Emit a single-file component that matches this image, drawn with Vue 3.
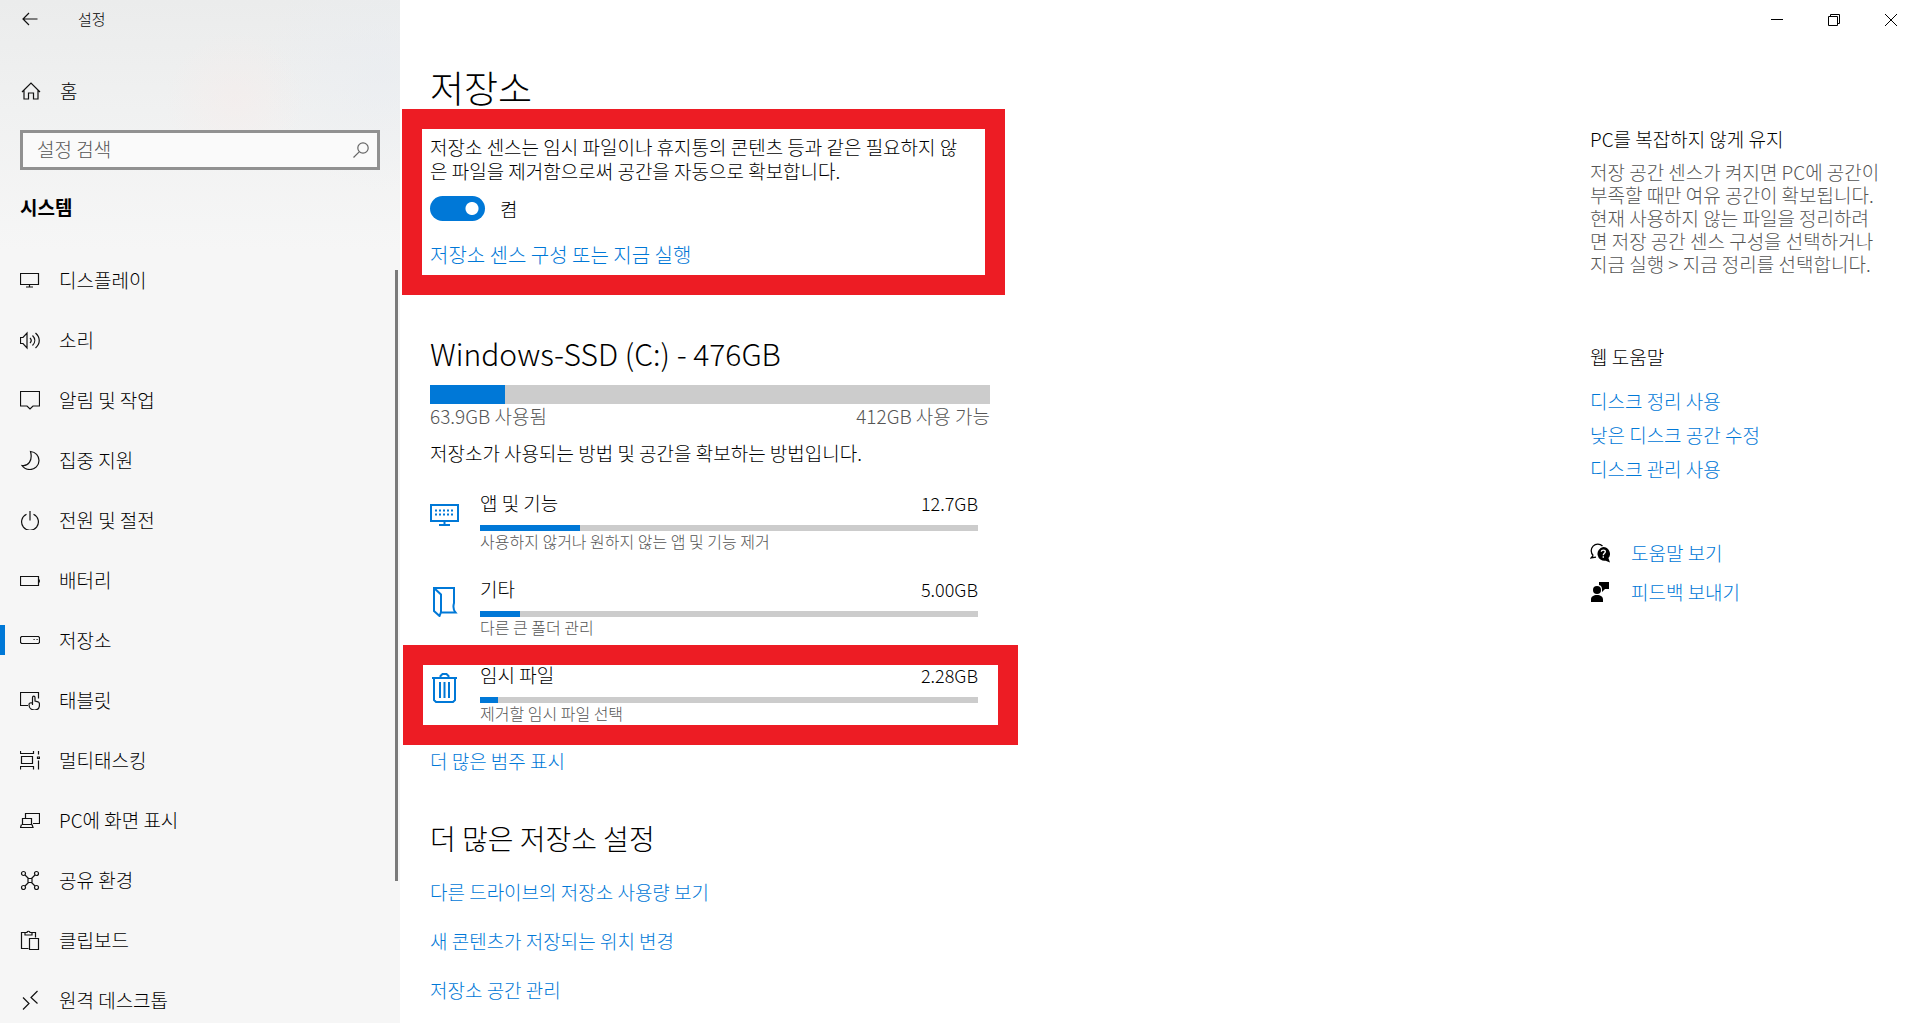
<template>
  <div class="settings">
    <aside class="sidebar">
      <div class="titlebar">
        <button class="back-btn" aria-label="뒤로">
          <svg width="16" height="14" viewBox="0 0 16 14" class="line"><path d="M15.500 7H1M7 1L1 7l6 6" /></svg>
        </button>
        <span class="app-name">설정</span>
      </div>

      <a href="#" class="home-link">
        <svg width="20" height="20" viewBox="0 0 20 20" class="line"><path d="M1 11L10 2l9 9M3 9.500V18h4.500v-6h5v6H17V9.500" /></svg>
        <span>홈</span>
      </a>

      <div class="search">
        <input v-model="query" type="text" placeholder="설정 검색" aria-label="설정 검색">
        <svg width="16" height="16" viewBox="0 0 16 16" class="line"><circle cx="10" cy="6" r="5.200" /><path d="M6.200 9.800L.5 15.500" /></svg>
      </div>

      <h2 class="group-title">시스템</h2>

      <nav class="nav">
        <a v-for="item in navItems" :key="item.label" href="#" class="nav-item" :class="{ active: item.label === current }" @click.prevent="current = item.label">
          <svg width="20" height="20" viewBox="0 0 20 20" class="line"><path :d="item.icon" /></svg>
          <span>{{ item.label }}</span>
        </a>
        <div class="scroll-thumb"></div>
      </nav>
    </aside>

    <div class="page">
      <div class="window-controls">
        <button aria-label="최소화"><svg width="12" height="12" viewBox="0 0 12 12"><path d="M0 5.500h12" /></svg></button>
        <button aria-label="이전 크기로"><svg width="12" height="12" viewBox="0 0 12 12"><path d="M.5 2.500h9v9h-9zM2.500 2.500v-2h9v9h-2" /></svg></button>
        <button aria-label="닫기"><svg width="12" height="12" viewBox="0 0 12 12"><path d="M0 0l12 12M12 0L0 12" /></svg></button>
      </div>

      <div class="content">
        <main class="main">
          <h1>저장소</h1>

          <section class="sense">
            <p>저장소 센스는 임시 파일이나 휴지통의 콘텐츠 등과 같은 필요하지 않<br>은 파일을 제거함으로써 공간을 자동으로 확보합니다.</p>
            <div class="toggle-row">
              <input id="sense" v-model="senseOn" type="checkbox" class="toggle">
              <label for="sense">{{ senseOn ? '켬' : '끔' }}</label>
            </div>
            <a href="#">저장소 센스 구성 또는 지금 실행</a>
            <div class="frame frame-sense"></div>
          </section>

          <section class="drive">
            <h2 class="drive-title">Windows-SSD (C:) - 476GB</h2>
            <div class="drive-bar"><div class="fill" :style="{ width: '13.4%' }"></div></div>
            <div class="drive-labels">
              <span>63.9GB 사용됨</span>
              <span>412GB 사용 가능</span>
            </div>
            <p class="drive-desc">저장소가 사용되는 방법 및 공간을 확보하는 방법입니다.</p>

            <ul class="usage">
              <li v-for="u in usage" :key="u.name" class="usage-item">
                <svg width="30" height="30" viewBox="0 0 30 30" class="usage-icon"><path :d="u.icon" /></svg>
                <div class="usage-body">
                  <div class="usage-head">
                    <span>{{ u.name }}</span>
                    <span class="usage-size">{{ u.size }}</span>
                  </div>
                  <div class="usage-bar"><div class="fill" :style="{ width: u.percent + '%' }"></div></div>
                  <p class="usage-desc">{{ u.desc }}</p>
                </div>
                <div v-if="u.marked" class="frame frame-item"></div>
              </li>
            </ul>
            <a href="#">더 많은 범주 표시</a>
          </section>

          <section class="more">
            <h2>더 많은 저장소 설정</h2>
            <a v-for="link in moreLinks" :key="link" href="#">{{ link }}</a>
          </section>
        </main>

        <aside class="help">
          <h3>PC를 복잡하지 않게 유지</h3>
          <p>저장 공간 센스가 켜지면 PC에 공간이<br>부족할 때만 여유 공간이 확보됩니다.<br>현재 사용하지 않는 파일을 정리하려<br>면 저장 공간 센스 구성을 선택하거나<br>지금 실행 &gt; 지금 정리를 선택합니다.</p>

          <h3 class="web-title">웹 도움말</h3>
          <div class="web-links">
            <a v-for="link in webLinks" :key="link" href="#">{{ link }}</a>
          </div>

          <div class="support">
            <a href="#">
              <svg width="20" height="20" viewBox="0 0 20 20">
                <path d="M3.200 12.500A6.300 6.300 0 1 1 12.500 3M3.200 12.500L1 15l5-.8" fill="none" stroke="#000" stroke-width="1.300" />
                <path d="M13.200 4a6.800 6.800 0 0 1 5.200 11.100L20 19.500l-4.300-1.800A6.800 6.800 0 1 1 13.200 4z" />
                <path d="M11.300 8.800c.2-2.200 4-2.200 4 0 0 1.500-2 1.600-2 3.400M13.300 13.300v1.500" fill="none" stroke="#fff" stroke-width="1.400" />
              </svg>
              <span>도움말 보기</span>
            </a>
            <a href="#">
              <svg width="20" height="20" viewBox="0 0 20 20">
                <circle cx="7" cy="8" r="4" />
                <path d="M1 20v-2.500C1 14.500 3.500 13 7 13s6 1.500 6 4.500V20zM9 0h10v7h-4l-3 3V7.500C12 5 11 3.500 9 3z" />
              </svg>
              <span>피드백 보내기</span>
            </a>
          </div>
        </aside>
      </div>
    </div>
  </div>
</template>

<script setup>
import { ref } from 'vue';

const query = ref('');
const current = ref('저장소');
const senseOn = ref(true);

const navItems = [
  { label: '디스플레이', icon: 'M.5 3.500h18v11H.5zM9.500 14.500v2.500M6 17h7' },
  { label: '소리', icon: 'M.5 7.500h2.500L7 3v15l-4-4.500H.5zM10 8c1.500 1.500 1.500 3.500 0 5M12.500 5.500c3 3 3 7 0 10M15.500 3c5 4.500 5 10.500 0 15' },
  { label: '알림 및 작업', icon: 'M.5 1.500h19v14.500H13l-3 3-3-3H.5z' },
  { label: '집중 지원', icon: 'M10.500 1.500C15.500 2 19 5.500 19 10.500c0 5-4 9-9 9-3.500 0-6.500-1.500-8-4 6 1 11-4.500 8.500-14z' },
  { label: '전원 및 절전', icon: 'M10 1v9.500M6.500 4.200a8.400 8.400 0 1 0 7 0' },
  { label: '배터리', icon: 'M.5 6.500h18v9H.5zM19.300 9.500v3' },
  { label: '저장소', icon: 'M1.500 6.500h17l1 1v5l-1 1h-17l-1-1v-5zM13.500 9.500h1.200M16.500 9.500h1.200' },
  { label: '태블릿', icon: 'M8 15.500H.5v-13h18v6M12.500 15V7.500c0-1.800 2.500-1.800 2.500 0V11l3 .8c1.500.5 1.500 1.500 1.500 3 0 3-1.500 5.200-5 5.200-3.500 0-5.500-2.500-5.500-5.500 0-1.500 1.500-2 3.500-1.500' },
  { label: '멀티태스킹', icon: 'M.5 1v2.500h13V1M.5 19.500v-3h13v3M1.500 6.500h11v7h-11zM18.500 1v3.500M18.500 10.500v9M17.500 7h2v1.500h-2z' },
  { label: 'PC에 화면 표시', icon: 'M5.500 8V3.500h14v10H13M2.500 8.500h9v6h-9zM1.500 14.500L.5 17.500h12.500l-1-3' },
  { label: '공유 환경', icon: 'M5 5l3.500 3.500M15 5l-3.500 3.500M5 16l3.500-3.500M11.500 12.500L15 16M8 8.500h4v4H8zM1.500 3.500a2 2 0 1 0 4 0a2 2 0 1 0-4 0M14.500 3.500a2 2 0 1 0 4 0a2 2 0 1 0-4 0M1.500 17.500a2 2 0 1 0 4 0a2 2 0 1 0-4 0M14.500 17.500a2 2 0 1 0 4 0a2 2 0 1 0-4 0' },
  { label: '클립보드', icon: 'M8.500 18.500H1.500v-16H5M12 2.500h3.500v5M5 5V2.500h2C7 .8 10 .8 10 2.500h2V5zM9.500 8.500h9v11h-9z' },
  { label: '원격 데스크톱', icon: 'M17.500 1L11 7.500l6.500 6M3 7.500l6 6L3 19.500' },
];

const usage = [
  {
    name: '앱 및 기능',
    size: '12.7GB',
    percent: 20,
    desc: '사용하지 않거나 원하지 않는 앱 및 기능 제거',
    icon: 'M1 4h27v16H1zM14.500 20v4M9 24h11M5 9.500h2M9 9.500h2M13 9.500h2M17 9.500h2M21 9.500h2M5 13.500h2M9 13.500h2M13 13.500h2M17 13.500h2M21 13.500h2',
  },
  {
    name: '기타',
    size: '5.00GB',
    percent: 8,
    desc: '다른 큰 폴더 관리',
    icon: 'M4 1h20v15c-1 3.500-1 6.500 1.500 9.500H11M4 1l7 6.500v17.500L9.500 29 4 24z',
  },
  {
    name: '임시 파일',
    size: '2.28GB',
    percent: 3.6,
    desc: '제거할 임시 파일 선택',
    icon: 'M2 5h25M10.500 5V3l2-2h4l2 2v2M4 5v22l2 2h17l2-2V5M10 9v16M14.500 9v16M19 9v16',
    marked: true,
  },
];

const moreLinks = ['다른 드라이브의 저장소 사용량 보기', '새 콘텐츠가 저장되는 위치 변경', '저장소 공간 관리'];
const webLinks = ['디스크 정리 사용', '낮은 디스크 공간 수정', '디스크 관리 사용'];
</script>

<style>
body { margin: 0; overflow: hidden; }
</style>

<style scoped>
.settings { display: flex; height: 100vh; overflow: hidden; background: #fff; color: #000; font-family: "Noto Sans CJK KR", sans-serif; font-size: 19px; font-weight: 300; line-height: 24px; }
h1, h2, h3, p, ul { margin: 0; padding: 0; font-weight: 300; }
a { color: #0078d7; text-decoration: none; }
button { border: none; background: none; padding: 0; display: flex; align-items: center; justify-content: center; }
.line { fill: none; stroke: #111; stroke-width: 1.2; flex: none; }

/* 사이드바 */
.sidebar { width: 400px; flex: none; display: flex; flex-direction: column; background: radial-gradient(circle at 235px 100px, rgba(248,234,232,0.4), transparent 70px), radial-gradient(circle at 380px 70px, rgba(232,236,242,0.5), transparent 120px), linear-gradient(#ebecec, #f0f1f1 110px, #f6f6f6 250px); }
.titlebar { display: flex; align-items: center; height: 38px; }
.back-btn { width: 60px; height: 38px; }
.app-name { margin-left: 18px; font-size: 15px; }
.home-link { display: flex; align-items: center; gap: 19px; height: 60px; margin-top: 23px; padding-left: 21px; color: #000; }
.search { display: flex; align-items: center; height: 34px; margin: 9px 20px 0; padding: 0 8px 0 14px; border: 3px solid #919191; background: #fafafa; }
.search input { flex: 1; min-width: 0; height: 24px; margin-bottom: 2px; padding: 0; border: none; outline: none; background: none; font: inherit; }
.search input::placeholder { color: #555; opacity: 1; }
.search .line { stroke: #666; }
.group-title { height: 74px; margin: 0 20px 6px; line-height: 74px; font-size: 19px; font-weight: 700; }
.nav { position: relative; flex: 1; min-height: 0; overflow: hidden; }
.nav-item { display: flex; align-items: center; gap: 19px; height: 60px; padding-left: 20px; color: #000; }
.nav-item.active { background: linear-gradient(#0078d7, #0078d7) left center / 5px 30px no-repeat; }
.scroll-thumb { position: absolute; top: 20px; right: 2px; width: 3px; height: 79%; background: #7a7a7a; }

/* 본문 */
.page { flex: 1; min-width: 0; }
.window-controls { display: flex; justify-content: flex-end; height: 40px; padding-right: 1px; }
.window-controls button { width: 57px; }
.window-controls svg { fill: none; stroke: #000; stroke-width: 1; }
.content { display: flex; justify-content: space-between; padding: 22px 0 0 30px; }
.main { width: 560px; }
.main a { display: block; }
h1 { margin-bottom: 17px; font-size: 37px; line-height: 50px; }
.sense { position: relative; padding: 6px 0 8px; }
.sense a { font-size: 20px; }
.toggle-row { display: flex; align-items: center; gap: 15px; height: 25px; margin: 13px 0 22px; }
.toggle { appearance: none; width: 55px; height: 25px; margin: 0; border-radius: 13px; background: radial-gradient(circle at 42px 50%, #fff 6px, #0078d7 7px); }
.frame { position: absolute; border: 20px solid #ed1c24; pointer-events: none; }
.frame-sense { inset: -20px -15px -20px -28px; }
.frame-item { inset: -18px -28px -20px -27px; }

.drive { margin-top: 58px; }
.drive-title { font-size: 30px; line-height: 40px; }
.drive-bar { height: 19px; margin-top: 12px; background: #ccc; }
.fill { height: 100%; background: #0078d7; }
.drive-labels { display: flex; justify-content: space-between; color: #555; }
.drive-desc { margin-top: 13px; }
.usage { display: flex; flex-direction: column; gap: 24px; margin: 26px 0 24px; list-style: none; }
.usage-item { position: relative; display: flex; gap: 20px; padding-right: 12px; }
.usage-icon { flex: none; margin-top: 10px; fill: none; stroke: #0078d7; stroke-width: 2; }
.usage-body { flex: 1; }
.usage-head { display: flex; justify-content: space-between; height: 34px; }
.usage-size { font-size: 18px; }
.usage-bar { height: 6px; background: #ccc; }
.usage-desc { padding-bottom: 2px; font-size: 16px; line-height: 20px; color: #555; }

.more { display: flex; flex-direction: column; gap: 25px; margin-top: 48px; }
.more h2 { font-size: 28px; line-height: 34px; }

/* 도움말 */
.help { width: 330px; padding-top: 65px; }
.help h3 { font-size: 19px; }
.help p { margin-top: 9px; line-height: 23px; color: #555; }
.help .web-title { margin-top: 70px; }
.web-links { display: flex; flex-direction: column; gap: 10px; margin-top: 20px; }
.support { display: flex; flex-direction: column; gap: 15px; margin-top: 60px; }
.support a { display: flex; align-items: center; gap: 21px; }
</style>
